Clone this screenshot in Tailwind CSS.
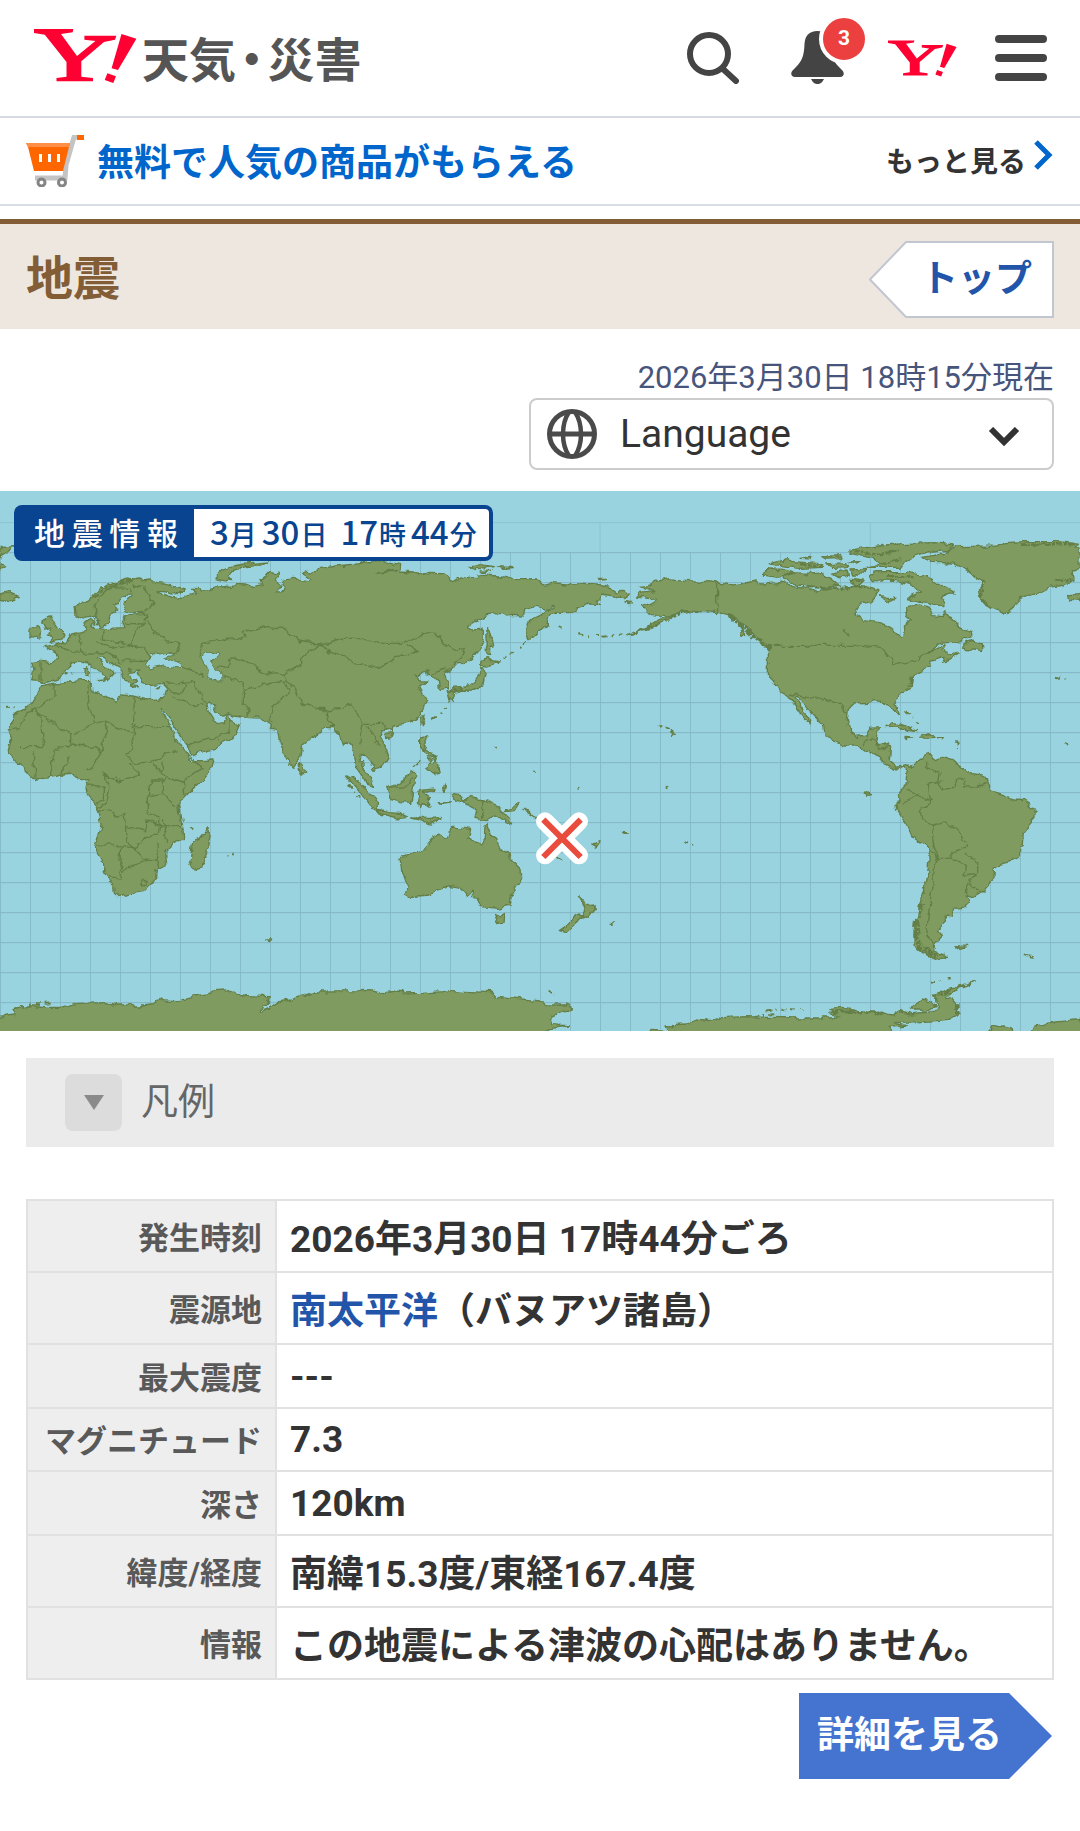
<!DOCTYPE html>
<html lang="ja">
<head>
  <meta charset="UTF-8">
  <meta name="viewport" content="width=device-width, initial-scale=1.0">
  <title>地震情報 - Yahoo!天気・災害</title>
  <script src="https://cdn.jsdelivr.net/npm/@tailwindcss/browser@4"></script>
</head>
<body class="bg-white font-[Roboto,'Noto_Sans_CJK_JP',sans-serif] text-[#333]">

  <!-- shared logo -->
  <svg class="hidden" aria-hidden="true">
    <symbol id="y-logo" viewBox="34 29 103 54">
      <path fill="#ff0033" d="M34 29H73.300L72.700 32.300L61 34L77 56L95.400 41L84.400 39.700V35.700H116.400L115 39.700L104 42L81.300 61.300V76.700L93 78V81.300H56.500V78L66.500 76.700V62L44.800 34.700L34 33ZM121.500 34L136.400 38.700L118 70L111.600 68.300ZM107.400 73.300L116 76.300L113.300 83L104.700 80Z"/>
    </symbol>
  </svg>

  <header class="flex h-[118px] items-center justify-between border-b-2 border-[#d8dae3] pr-[33px] pl-[34px]">
    <a href="#" class="flex items-center">
      <svg class="mb-1 h-[54px] w-[103px]" aria-hidden="true"><use href="#y-logo"/></svg>
      <span class="ml-[5px] flex gap-1 pt-1 text-[47px] leading-none font-bold text-[#555] [font-feature-settings:'palt']"><span>天気</span><span>・</span><span>災害</span></span>
    </a>
    <nav class="flex items-center">
      <button aria-label="検索" class="mr-[52px]">
        <svg class="size-[52px]" viewBox="0 0 52 52" fill="none" stroke="#444" stroke-width="6" stroke-linecap="round"><circle cx="22" cy="22" r="19"/><path d="M36 37L49 49"/></svg>
      </button>
      <button aria-label="通知" class="relative mr-[44px]">
        <svg class="h-[54px] w-[53px]" viewBox="0 0 53 54" fill="#444"><path d="M26.500 0C18 0 14 5 13.500 13C13 25 11 30 5 36L2 39C-1 42 0 46 4 46H49C53 46 54 42 51 39L48 36C42 30 40 25 39.500 13C39 5 35 0 26.500 0Z"/><path d="M20 48H33C31 52 29 53 26.500 53S22 52 20 48Z"/></svg>
        <span class="absolute -top-[17px] left-7 flex size-[50px] items-center justify-center rounded-full border-4 border-white bg-[#ec3f3f] pb-px text-[21px] leading-none font-bold text-white">3</span>
      </button>
      <a href="#" aria-label="Yahoo! JAPAN" class="mr-[38px]"><svg class="h-[37px] w-[69px]"><use href="#y-logo"/></svg></a>
      <button aria-label="メニュー" class="flex w-[52px] flex-col gap-[11px]">
        <span class="h-2 rounded-full bg-[#444]"></span>
        <span class="h-2 rounded-full bg-[#444]"></span>
        <span class="h-2 rounded-full bg-[#444]"></span>
      </button>
    </nav>
  </header>

  <a href="#" class="flex h-[88px] items-center border-b-2 border-[#d8dce3] px-[26px]">
    <svg class="h-[52px] w-[58px]" viewBox="0 0 58 52" fill="none" aria-hidden="true">
      <path d="M9 43H39L40 30L48 2H53" stroke="#c4c4c4" stroke-width="5"/>
      <circle cx="15.500" cy="47.500" r="3.500" stroke="#858585" stroke-width="3"/>
      <circle cx="36" cy="47.500" r="3.500" stroke="#858585" stroke-width="3"/>
      <path fill="#ff6600" d="M0 8H44L37 36H8L2 12Z"/><path fill="#ff8f46" d="M0 8H44L43 12H2Z"/>
      <path fill="#ff6600" d="M51 0H58V5H51Z"/>
      <path d="M14.500 19V27M23.500 19V27M32.500 19V27" stroke="#fff" stroke-width="3"/>
    </svg>
    <span class="ml-[13px] pt-1 text-[37px] leading-none font-bold text-[#0066cc]">無料で人気の商品がもらえる</span>
    <span class="ml-auto pt-1 text-[28px] leading-none font-bold">もっと見る</span>
    <svg class="mb-3 ml-2 h-[30px] w-[20px]" viewBox="0 0 20 30" fill="none" stroke="#0066cc" stroke-width="5" aria-hidden="true"><path d="M2 2L15 15L2 28"/></svg>
  </a>

  <main>
    <div class="mt-[13px] flex items-center justify-between border-t-[5px] border-[#825d36] bg-[#eee7e0] px-[26px] pt-[17px] pb-[11px]">
      <h1 class="pb-[2px] text-[47px] leading-none font-bold text-[#825d36]">地震</h1>
      <a href="#" class="flex h-[77px]">
        <svg class="w-[38px]" viewBox="0 0 38 77" aria-hidden="true"><path fill="#fff" stroke="#c1c6d1" stroke-width="2" d="M39 1H37L1 38.500L37 76H39"/></svg>
        <span class="flex items-center border-y-2 border-r-2 border-[#c1c6d1] bg-white pr-5 pl-[14px] text-[37px] leading-none font-bold text-[#2255aa]">トップ</span>
      </a>
    </div>

    <div class="flex flex-col items-end px-[26px] pt-7 pb-[21px]">
      <p class="text-[31px] leading-[41px] text-[#47557d]">2026年3月30日 18時15分現在</p>
      <div class="relative h-[72px] w-[525px]">
        <select aria-label="Language" class="h-full w-full appearance-none rounded-lg border-2 border-[#ccc] bg-white pl-[89px] text-[39px] leading-normal">
          <option>Language</option>
          <option>日本語</option>
          <option>English</option>
        </select>
        <svg class="pointer-events-none absolute top-[11px] left-[18px] size-[50px]" viewBox="0 0 50 50" fill="none" stroke="#4a4a4a" stroke-width="5" aria-hidden="true"><circle cx="25" cy="25" r="22.500"/><path d="M3 25H47"/><path stroke-width="4.500" d="M22 3C14 15 14 35 22 47M28 3C36 15 36 35 28 47"/></svg>
        <svg class="pointer-events-none absolute top-[29px] right-[34px] h-5 w-[32px]" viewBox="0 0 32 20" fill="none" stroke="#333" stroke-width="6" aria-hidden="true"><path d="M3 2L16 15L29 2"/></svg>
      </div>
    </div>

    <div class="relative">
      <svg class="block w-full" viewBox="0 3 3240 1620" role="img" aria-label="震央の位置">
        <defs>
          <pattern id="grid" x="0" y="6" width="90" height="90" patternUnits="userSpaceOnUse">
            <path d="M1 0V90M0 2H90" stroke="#82b6c3" stroke-width="3" fill="none"/>
          </pattern>
          <!-- breaks up straight coast segments -->
          <filter id="coast" filterUnits="userSpaceOnUse" x="0" y="3" width="3240" height="1620">
            <feTurbulence type="fractalNoise" baseFrequency="0.035" numOctaves="3" seed="4" result="noise"/>
            <feDisplacementMap in="SourceGraphic" in2="noise" scale="22" xChannelSelector="R" yChannelSelector="G"/>
          </filter>
        </defs>
        <path fill="#99d3df" d="M0 3H3240V1623H0Z"/>
        <path fill="url(#grid)" d="M0 186H3240V1623H0Z"/>
        <path stroke="#8cc3cf" stroke-width="3" d="M0 98H3240M181 98V186M991 98V186M1800 98V186M2611 98V186"/>

        <g filter="url(#coast)">
        <g fill="#7f9b5f" stroke="#647e46" stroke-width="4" stroke-linejoin="round">
          <!-- Eurasia and Africa -->
          <path d="M225 350L240 344L262 332L275 322L300 294L310 296L330 283L350 282L378 270L390 273L412 267L430 272L452 270L458 278L500 284L553 300L545 310L510 312L490 304L470 306L498 318L520 322L545 325L560 315L590 308L575 295L600 296L605 304L640 292L700 288L705 280L740 282L760 290L785 284L780 268L795 258L815 247L835 253L832 275L840 288L825 305L845 306L856 292L846 285L850 268L880 262L895 272L925 275L935 266L905 250L925 244L945 248L955 236L1010 228L1080 220L1105 215L1170 217L1202 224L1200 236L1180 240L1130 250L1195 243L1245 246L1275 253L1290 247L1325 248L1345 256L1350 268L1362 272L1380 260L1400 265L1430 265L1435 255L1500 258L1540 268L1616 270L1632 286L1650 280L1700 285L1720 278L1790 282L1830 290L1850 305L1875 304L1888 315L1870 326L1850 320L1808 312L1800 325L1792 330L1798 343L1765 342L1740 352L1710 368L1662 366L1650 377L1645 390L1645 402L1620 415L1612 430L1588 452L1580 430L1582 400L1600 385L1630 370L1660 348L1655 345L1640 358L1622 355L1605 352L1575 362L1570 375L1540 373L1520 376L1500 370L1460 374L1430 392L1400 412L1415 420L1440 418L1450 425L1449 450L1440 475L1415 505L1395 520L1365 522L1350 538L1328 550L1345 575L1345 594L1318 598L1315 570L1300 552L1280 548L1288 540L1272 545L1252 562L1242 558L1258 572L1284 573L1255 590L1268 615L1280 630L1275 645L1258 680L1225 700L1180 708L1175 725L1165 715L1148 722L1140 738L1160 775L1165 800L1150 825L1125 838L1112 820L1095 800L1084 790L1080 815L1090 835L1107 855L1122 893L1100 886L1088 860L1070 835L1064 800L1058 768L1040 756L1030 768L1020 735L1002 710L975 710L960 730L935 745L905 768L900 800L892 815L880 834L865 818L850 790L838 755L832 718L808 715L812 706L780 684L735 682L700 678L690 670L665 672L648 664L640 648L625 636L616 642L625 665L640 690L652 698L670 695L685 668L690 690L718 705L705 735L680 755L640 775L600 787L572 795L565 765L540 735L505 680L485 655L482 658L497 690L512 710L520 735L545 765L565 795L570 812L600 812L642 810L635 832L600 875L570 905L535 942L545 1005L548 1045L520 1060L497 1085L500 1125L472 1140L470 1165L430 1205L380 1213L355 1220L343 1210L340 1185L315 1150L305 1110L285 1062L303 1005L290 950L262 915L258 890L267 870L235 868L215 850L190 852L160 862L112 867L70 845L62 825L45 805L25 780L35 745L25 715L50 670L95 640L125 590L165 582L240 572L272 572L280 605L330 620L350 635L360 615L400 618L440 630L490 625L500 590L498 580L452 583L425 578L415 552L420 542L390 548L395 562L410 580L395 590L375 570L355 530L330 515L302 500L295 505L310 522L345 550L330 552L325 575L310 560L295 540L270 520L245 512L215 520L195 540L175 570L130 582L120 575L98 572L105 540L98 517L120 514L160 518L170 500L165 485L138 470L165 465L172 458L200 458L205 445L215 432L245 425L262 420L252 398L275 388L285 398L278 412L300 412L325 418L375 416L368 395L375 378L400 372L435 370L410 364L375 362L372 340L400 318L375 318L340 345L350 360L330 378L325 400L300 410L285 380L250 385L228 375Z"/>
          <!-- North and South America -->
          <path d="M1918 292L1945 290L1970 274L2010 266L2060 272L2115 274L2160 280L2200 285L2270 273L2285 282L2340 278L2380 290L2425 296L2450 308L2460 296L2540 298L2570 285L2600 290L2640 300L2615 332L2580 345L2565 372L2590 392L2640 398L2680 412L2685 430L2702 445L2712 430L2710 408L2728 395L2718 378L2722 350L2760 345L2785 355L2800 378L2825 380L2838 365L2855 388L2880 410L2915 425L2915 443L2880 455L2820 460L2780 490L2840 463L2830 480L2850 495L2880 488L2860 502L2830 514L2826 502L2790 515L2790 530L2755 545L2740 560L2735 595L2695 615L2688 635L2698 680L2685 668L2672 645L2655 635L2620 632L2600 640L2560 642L2545 658L2542 690L2550 730L2570 742L2600 738L2610 715L2638 713L2632 745L2625 765L2650 762L2672 772L2668 812L2690 832L2725 822L2738 832L2748 810L2775 800L2790 793L2800 808L2820 800L2860 812L2878 828L2905 850L2950 855L2968 885L2972 905L3020 920L3040 930L3070 932L3105 955L3105 985L3070 1025L3065 1080L3048 1108L3010 1118L2983 1135L2982 1165L2945 1205L2920 1220L2895 1215L2908 1238L2890 1255L2860 1258L2855 1278L2835 1275L2840 1295L2815 1320L2828 1335L2800 1360L2802 1385L2840 1402L2810 1408L2770 1390L2742 1365L2742 1320L2755 1270L2762 1230L2780 1170L2787 1110L2787 1075L2735 1040L2725 1015L2690 960L2688 945L2698 935L2692 915L2700 900L2720 880L2725 840L2710 828L2692 840L2650 820L2640 800L2595 780L2575 765L2530 765L2475 735L2470 705L2430 665L2395 622L2388 622L2400 648L2425 680L2432 705L2405 675L2365 618L2335 600L2305 550L2305 480L2280 455L2258 430L2200 380L2160 368L2100 365L2050 362L2010 380L2000 392L1960 407L1895 432L1960 400L2005 380L1955 377L1945 370L1925 350L1965 335L1970 325L1912 318L1920 310L1965 305Z"/>
          <!-- Greenland and the Arctic islands -->
          <path d="M2765 202L2830 192L2840 180L2870 170L2990 168L3020 158L3070 155L3180 155L3235 163L3225 170L3240 176V235L3220 240L3222 270L3190 285L3150 292L3120 308L3060 322L3035 365L3020 368L2975 355L2960 345L2938 320L2935 300L2960 280L2925 265L2915 250L2895 235L2860 222L2790 220Z"/>
          <path d="M0 172L45 170L20 188L0 200ZM0 315L30 308L58 320L10 336L0 334ZM3240 335L3210 330L3205 315L3240 310ZM0 215L20 230L0 240Z"/>
          <path d="M2550 180L2580 175L2660 165L2720 160L2800 158L2865 165L2840 178L2780 186L2740 200L2710 215L2700 232L2600 232L2640 222L2620 205L2550 190Z"/>
          <path d="M2610 258L2630 245L2720 245L2780 260L2818 282L2865 308L2830 318L2840 340L2830 350L2790 340L2720 325L2765 305L2730 285L2690 275L2620 272Z"/>
          <path d="M2350 258L2370 248L2430 250L2470 245L2475 262L2520 285L2480 292L2390 285L2350 270ZM2290 258L2305 237L2360 238L2385 248L2330 265ZM2310 222L2360 208L2380 215L2450 220L2470 232L2400 235L2340 226ZM2400 205L2430 198L2435 207ZM2465 198L2520 198L2525 206L2480 207ZM2480 222L2540 218L2545 230L2500 232ZM2495 250L2540 240L2545 255L2520 265ZM2550 240L2600 238L2580 255L2555 255ZM2550 265L2590 270L2570 290L2555 280ZM2550 216L2580 215L2570 222ZM2640 320L2690 325L2660 335Z"/>
          <path d="M645 262L665 242L700 228L740 222L800 216L790 224L740 230L695 245L685 258L695 272L660 267ZM1410 228L1440 224L1480 230L1430 236ZM1495 230L1540 233L1510 235ZM1440 243L1470 244L1450 248ZM1790 265L1822 265L1800 269ZM1875 335L1900 338L1885 341Z"/>
          <!-- Europe's islands, Japan, Sakhalin -->
          <path d="M130 380L155 378L150 390L165 405L180 425L195 435L190 446L150 455L160 442L145 435L152 420L135 412L125 395ZM90 420L110 410L125 420L122 440L90 445ZM255 535L266 530L264 555L256 555ZM292 568L316 567L314 576ZM390 590L415 593L400 595ZM470 592L485 589L478 596Z"/>
          <path d="M1456 498L1475 512L1500 516L1465 528L1442 526ZM1448 532L1456 550L1448 588L1415 600L1380 602L1350 610L1365 592L1400 588L1425 575L1438 555L1440 535ZM1342 605L1365 608L1358 634L1350 628ZM1460 416L1470 430L1482 468L1472 470L1472 490L1458 490L1462 460ZM1262 682L1275 680L1272 695L1264 710ZM1158 730L1178 728L1172 744L1160 742Z"/>
          <!-- South-East Asia -->
          <path d="M1262 740L1280 738L1282 760L1272 780L1295 790L1310 800L1290 798L1275 790L1262 775ZM1285 820L1312 818L1318 850L1300 855L1280 838ZM1240 830L1260 812L1245 828ZM1282 800L1298 806L1290 815ZM1300 795L1312 805L1308 815Z"/>
          <path d="M1040 855L1060 862L1090 890L1132 935L1132 960L1105 945L1080 905ZM1130 960L1165 968L1200 970L1225 982L1200 985L1140 972ZM1235 984L1290 985L1325 982L1292 1003L1260 990ZM1160 892L1195 885L1235 843L1250 858L1240 890L1232 940L1200 938L1172 928ZM1258 902L1305 896L1300 902L1270 908L1288 920L1278 925L1290 955L1270 940L1265 955L1252 935ZM1328 890L1336 885L1332 910ZM1315 935L1355 936L1320 940Z"/>
          <path d="M1355 910L1385 915L1390 935L1412 922L1450 930L1490 945L1510 970L1525 985L1535 1002L1505 990L1485 978L1460 992L1425 985L1430 960L1395 940L1368 928ZM1510 965L1550 945L1560 940L1545 962ZM1572 955L1590 970L1605 985L1585 972Z"/>
          <path d="M898 820L915 845L905 855L898 842ZM623 1017L633 1040L605 1130L585 1137L570 1115L578 1055L600 1045ZM800 1350L815 1350L812 1355Z"/>
          <!-- Oceania -->
          <path d="M1200 1105L1230 1093L1265 1085L1285 1060L1300 1042L1320 1030L1340 1042L1352 1020L1352 1012L1375 1012L1412 1018L1405 1045L1445 1065L1452 1050L1455 1010L1462 1003L1475 1035L1490 1045L1500 1078L1525 1090L1532 1110L1560 1135L1562 1165L1535 1215L1530 1245L1510 1250L1495 1255L1445 1250L1432 1225L1420 1222L1420 1202L1400 1220L1382 1195L1350 1190L1310 1200L1290 1212L1250 1215L1230 1222L1213 1212L1222 1190L1205 1140ZM1482 1270L1500 1278L1515 1270L1512 1295L1495 1300ZM1735 1215L1755 1235L1762 1250L1788 1248L1765 1278L1745 1280L1758 1262L1750 1240ZM1730 1272L1748 1275L1735 1300L1700 1328L1678 1322L1710 1300ZM1775 1062L1800 1055L1790 1070ZM1668 1098L1688 1108L1672 1104ZM1865 1030L1885 1032L1870 1033ZM1998 711L2008 716L2004 718ZM2014 722L2026 731L2018 736ZM1978 708L1986 708L1982 711ZM2595 905L2615 914L2600 916Z"/>
          <!-- Caribbean and south Atlantic -->
          <path d="M2655 710L2675 698L2700 700L2755 725L2725 722L2695 708ZM2760 738L2785 728L2805 742L2760 745ZM2715 742L2735 744L2720 746ZM2815 743L2830 743L2825 746ZM2890 463L2915 452L2920 458L2945 465L2945 485L2920 480L2885 478ZM2868 1370L2900 1372L2880 1378ZM3075 1393L3100 1398L3085 1397ZM2535 420L2545 440L2540 435ZM2220 412L2240 440L2225 435Z"/>
          <!-- Antarctica -->
          <path d="M-20 1585L20 1575L45 1572L38 1560L80 1548L115 1548L150 1552L180 1552L230 1540L320 1538L355 1545L430 1545L470 1540L480 1525L495 1533L530 1535L545 1526L600 1515L625 1512L640 1502L680 1500L710 1512L735 1516L808 1520L804 1545L785 1550L780 1567L815 1552L840 1535L870 1530L900 1520L950 1506L1080 1505L1085 1498L1120 1500L1150 1508L1180 1500L1205 1502L1215 1512L1260 1510L1330 1505L1350 1502L1470 1508L1485 1518L1550 1525L1620 1533L1640 1545L1700 1545L1717 1553L1710 1560L1680 1565L1645 1582L1655 1603L1705 1608L1660 1615L1620 1640H-20ZM1940 1640L1950 1618L1985 1620L1988 1640ZM2030 1640L1995 1605L2060 1602L2090 1590L2130 1595L2160 1583L2240 1580L2300 1582L2400 1584L2520 1584L2490 1570L2490 1562L2640 1568L2680 1572L2700 1565L2730 1572L2800 1565L2812 1555L2810 1530L2800 1515L2850 1495L2925 1475L2870 1495L2840 1522L2870 1540L2875 1575L2850 1588L2780 1594L2680 1598L2720 1608L2670 1612L2690 1640ZM2965 1640L2975 1610L3010 1608L3030 1612L3035 1640ZM3090 1640L3105 1608L3150 1598L3260 1586V1640Z"/>
          <path d="M2490 1555L2530 1552L2570 1560L2510 1562ZM2740 1550L2765 1530L2795 1535L2805 1550L2780 1560L2735 1560Z"/>
        </g>

        <!-- inland seas -->
        <path fill="#99d3df" stroke="#647e46" stroke-width="3" d="M433 525L450 490L480 495L515 488L520 495L495 505L545 520L552 535L520 532L490 528L450 540ZM605 500L630 488L657 487L653 498L632 510L645 530L662 548L663 572L640 575L622 562L625 540L615 520Z"/>

        <!-- small islands -->
        <g fill="none" stroke="#647e46" stroke-width="6" stroke-dasharray="15 12 5 19 9 14">
          <path d="M1580 455L1555 480L1500 510M1670 408L1695 418M1735 432L1760 438L1790 441L1860 437L1920 427M1350 625L1330 668L1290 690M15 650L60 652M570 1010L590 1022M1045 880L1080 925M2050 1055L2080 1068M2868 748L2874 780M188 552L222 546M3165 560L3200 570M3195 755L3212 770M1486 768L1490 775M2790 1475L2850 1465M2300 1565L2340 1556L2420 1560M2260 1578L2330 1572M60 1546L160 1540M1640 1502L1665 1514M1829 1301L1838 1302M2712 665L2730 680L2765 708M1600 844L1608 846M2000 890L2008 892M1735 890L1736 900M678 1097L686 1095M696 1090L704 1090"/>
        </g>

        <!-- fjord coasts -->
        <g fill="none" stroke="#647e46" stroke-width="14" stroke-dasharray="20 4 9 3">
          <path d="M2185 375L2240 420L2265 445L2310 475M2752 1290L2748 1340L2765 1375L2815 1403M2765 1240L2758 1280M2850 1500L2810 1518M2872 1540L2872 1575M2735 560L2732 590"/>
          <path stroke-width="8" d="M280 325L310 298L350 284L400 272M2400 222L2450 230M2420 290L2500 295L2600 290M2560 185L2640 195L2700 185M2660 262L2740 262M2640 222L2700 205M3060 164L3220 162M2950 272L2942 320L2965 348M3170 268L3215 272M1340 604L1390 596M2500 1566L2660 1569M2010 385L2060 362M1895 430L1960 408"/>
        </g>

        <!-- national borders -->
        <g fill="none" stroke="#647e46" stroke-width="4" stroke-linejoin="round">
          <path d="M290 400L285 345L300 320L335 290L390 292L395 310M395 285L435 290L445 310L462 340L435 365M440 370L432 390L450 410L465 435L490 440L500 455L540 462L530 485L510 490M375 400L430 402L400 440L390 462L310 450L312 420M240 430L245 455L245 490M290 455L330 475L380 470L390 462L440 475L445 500L430 515L365 512M245 490L300 488L330 490L345 505L360 520M165 465L240 490M120 520L120 570M385 530L395 545M550 530L600 550L610 560M600 500L605 460L635 455L650 445L705 450L735 440L730 425L800 410L850 415L900 450L960 465L930 485L905 505L905 530L850 550L830 545L790 550L740 515L690 505L685 535L650 530M665 560L690 565L725 575L730 600L730 640L745 650L740 680M960 465L1010 450L1080 442L1140 460L1215 460L1230 450L1270 428L1310 430L1330 460L1370 480L1392 475L1385 500L1362 520M960 465L1000 490L1040 500L1060 520L1130 530L1185 510L1190 500L1255 485L1220 465M1300 550L1340 535M730 600L820 575L855 580L870 600L830 640L820 655L805 690L820 700M850 550L860 575L890 600L910 640L970 660L1025 655L1060 645L1085 700L1140 700L1160 715M900 640L960 655L975 655L980 690L1005 710M1085 700L1080 760M1100 710L1140 770M500 580L580 575L600 610L615 640M500 600L545 610L560 590L560 575M520 620L580 650L610 645M565 765L650 740L655 755M650 740L690 725L690 690"/>
          <path d="M165 585L165 615L100 660L75 665L60 715L30 720M100 660L125 680L130 770L60 770M100 660L215 735L215 765L170 775L150 800M270 575L265 620L270 675L290 695L225 735M290 695L320 700L400 730L403 620M405 710H510M400 730L395 780L380 790L400 820L460 815L530 780M320 700L310 760L300 800L260 840M215 765L290 770L300 790M100 790L105 860M155 800L155 860M205 800L185 850M310 850L345 870L420 860L390 820M310 850L330 890L320 940L290 955M345 870L350 860M265 885L310 890L310 930L290 940M295 960L330 962L345 975L375 972L380 1010L440 1020L440 990L500 1010L545 1010M445 915L455 870L490 870L490 910L445 918L445 970L480 985L475 1035L430 1050L400 1070L290 1063M490 915L530 950M550 875L555 920M490 870L500 860L550 873L610 835L570 800M380 1010L380 1055L400 1070L430 1105L465 1110L475 1055M365 1070L360 1165L330 1160M365 1145L440 1108L465 1110L475 1140M425 1170L440 1168L435 1185L422 1180ZM460 1140L470 1150M490 990L500 1060M460 820L490 850L500 860M490 815L485 850"/>
          <path d="M2150 280V365M2318 466H2565L2640 475L2675 500L2675 530L2740 515L2800 475M2365 612L2440 625L2470 622L2500 640L2520 640L2540 670M2590 765L2600 750L2620 745L2640 775L2665 770M2780 815L2780 840L2820 850L2815 880L2830 900L2865 890L2870 865L2890 865L2895 895L2945 885L2960 880M2720 898L2760 915L2790 930L2785 880L2830 870M2700 945L2740 925L2760 910M2795 930L2760 960L2765 990L2800 1005L2830 995L2870 1020L2900 1065L2860 1085L2855 1105L2815 1105L2800 1060L2795 1005M2787 1075L2815 1110L2800 1140L2795 1200L2785 1270L2780 1340L2810 1375M2855 1105L2900 1130L2895 1155L2930 1150L2930 1120L2900 1085M2930 1150L2900 1180L2900 1215M2905 1180L2940 1205M1448 930V985M1170 895L1220 890L1235 868"/>
        </g>
        </g>

        <!-- epicentre -->
        <path stroke="#fff" stroke-width="54" stroke-linecap="round" d="M1635 994L1737 1096M1737 994L1635 1096"/>
        <path stroke="#e94b3c" stroke-width="18" d="M1630 989L1742 1101M1742 989L1630 1101"/>
      </svg>

      <div class="absolute top-[14px] left-[14px] flex h-14 items-stretch rounded-lg border-4 border-[#08448f] bg-[#08448f] font-['Noto_Sans_CJK_JP',sans-serif] leading-none">
        <span class="mx-4 flex w-[144px] items-center pb-1 text-[31px] font-medium text-white"><span class="w-full [text-align-last:justify]">地震情報</span></span>
        <span class="flex items-baseline gap-px rounded-r-sm bg-white pt-[6px] pr-3 pl-4 text-[33px] font-medium text-[#08448f]">3<span class="mr-1 text-[27px]">月</span>30<span class="mr-3 text-[27px]">日</span>17<span class="mr-1 text-[27px]">時</span>44<span class="text-[27px]">分</span></span>
      </div>
    </div>

    <section class="px-[26px] pt-[27px] pb-[52px]">
      <button class="flex h-[89px] w-full items-center bg-[#ebebeb] pb-px pl-[39px] text-[37px] leading-none text-[#666]">
        <span class="mr-[19px] flex size-[57px] items-center justify-center rounded-lg bg-[#dcdcdc]">
          <svg class="h-[15px] w-5" viewBox="0 0 20 15" fill="#8a8a8a" aria-hidden="true"><path d="M0 0H20L10 15Z"/></svg>
        </span>
        凡例
      </button>

      <table class="mt-[52px] w-full border-collapse border-2 border-[#e1e1e1] text-left text-[37px] leading-none font-bold [&_td]:border-2 [&_td]:border-[#e1e1e1] [&_td]:px-[13px] [&_th]:w-[249px] [&_th]:border-2 [&_th]:border-[#e1e1e1] [&_th]:bg-[#eee] [&_th]:px-[13px] [&_th]:pt-1 [&_th]:text-right [&_th]:text-[31px] [&_th]:whitespace-nowrap [&_th]:text-[#595959]">
        <tbody>
          <tr class="h-[72px]"><th scope="row">発生時刻</th><td class="pt-[6px]">2026年3月30日 17時44分ごろ</td></tr>
          <tr class="h-[72px]"><th scope="row">震源地</th><td class="pt-[6px]"><a href="#" class="text-[#2255aa]">南太平洋</a>（バヌアツ諸島）</td></tr>
          <tr class="h-16"><th scope="row">最大震度</th><td>---</td></tr>
          <tr class="h-[63px]"><th scope="row">マグニチュード</th><td>7.3</td></tr>
          <tr class="h-16"><th scope="row">深さ</th><td>120km</td></tr>
          <tr class="h-[72px]"><th scope="row">緯度/経度</th><td class="pt-[6px]">南緯15.3度/東経167.4度</td></tr>
          <tr class="h-[72px]"><th scope="row">情報</th><td class="pt-[6px]">この地震による津波の心配はありません。</td></tr>
        </tbody>
      </table>

      <div class="mt-[13px] flex justify-end pr-[2px]">
        <a href="#" class="flex h-[86px] items-center bg-[#4573d0] pr-[50px] pb-px pl-[18px] text-[37px] leading-none font-bold text-white [clip-path:polygon(0_0,calc(100%-43px)_0,100%_50%,calc(100%-43px)_100%,0_100%)]">詳細を見る</a>
      </div>
    </section>
  </main>
</body>
</html>
